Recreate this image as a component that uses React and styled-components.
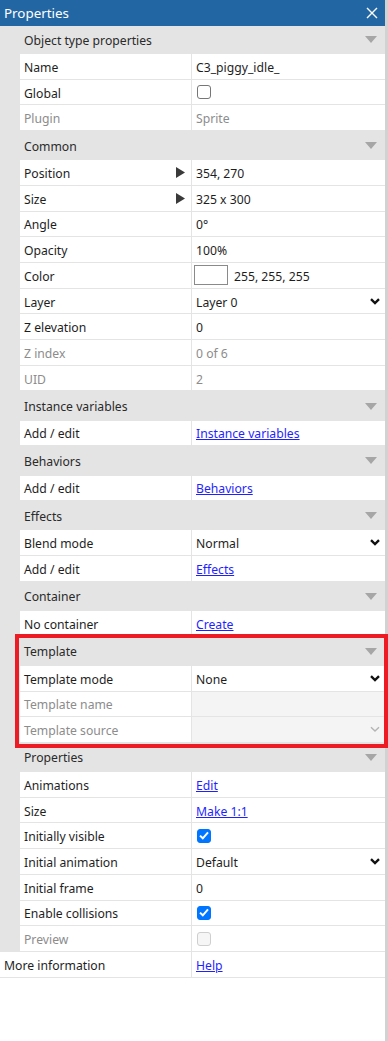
import React from 'react';
import styled, { createGlobalStyle } from 'styled-components';

const GlobalStyle = createGlobalStyle`
	body {
		margin: 0;
		background: #fff;
		font-family: "Noto Sans", "Open Sans", sans-serif;
		font-size: 12.2px;
		color: #1e1e1e;
	}
`;

const Panel = styled.div`
	position: relative;
	box-sizing: border-box;
	width: 388px;
	min-height: 1041px;
	border-right: 3px solid #d2d2d2;
	background: #fff;
`;

const TitleBar = styled.div`
	display: flex;
	align-items: center;
	justify-content: space-between;
	height: 26px;
	padding: 0 7px 0 4px;
	background: #2267a4;
	color: #fff;
	font-size: 13.4px;
`;

const Section = styled.div`
	background: #e4e4e4;
	padding-left: 20px;
`;

const Header = styled.div`
	display: flex;
	align-items: center;
	justify-content: space-between;
	box-sizing: border-box;
	height: ${p => (p.$first ? 28 : 29.2)}px;
	padding: ${p => (p.$first ? 0 : 1)}px 8px 0 4px;
	color: #2a2a2a;
`;

const Row = styled.div`
	display: grid;
	grid-template-columns: ${p => (p.$wide ? 192 : 172)}px 1fr;
	height: 25.7px;
	box-sizing: border-box;
	background: #fff;
	border-bottom: 1px solid #e4e4e4;
	color: ${p => (p.$disabled ? '#8c8c8c' : '#1e1e1e')};
`;

const Label = styled.div`
	display: flex;
	align-items: center;
	justify-content: space-between;
	padding: 2px 6px 0 4px;
	border-right: 1px solid #e4e4e4;
	white-space: nowrap;
`;

const Value = styled.div`
	display: flex;
	align-items: center;
	justify-content: space-between;
	padding: 2px 5px 0 4px;
	background: ${p => (p.$disabled ? '#f4f4f4' : '#fff')};
	white-space: nowrap;
`;

const Link = styled.a`
	color: #1f1fff;
	text-decoration: underline;
	cursor: pointer;
`;

const Box = styled.span`
	display: inline-flex;
	align-items: center;
	justify-content: center;
	box-sizing: border-box;
	width: 14px;
	height: 14px;
	margin: -2px 0 0 1px;
	border-radius: 3px;
	border: 1px solid ${p => (p.$checked ? '#0075ff' : p.$disabled ? '#cfcfcf' : '#767676')};
	background: ${p => (p.$checked ? '#0075ff' : p.$disabled ? '#f6f6f6' : '#fff')};
`;

const Swatch = styled.span`
	display: inline-block;
	box-sizing: border-box;
	width: 34px;
	height: 20px;
	margin: -2px 6px 0 -2px;
	border: 1px solid #8a8a8a;
	background: #fff;
`;

const Highlight = styled.div`
	position: absolute;
	left: 15px;
	top: 634px;
	width: 373px;
	height: 114px;
	box-sizing: border-box;
	border: 4px solid #ed1c24;
	pointer-events: none;
`;

const Close = () => (
	<svg width="12" height="12" viewBox="0 0 12 12">
		<path d="M1 1L11 11M11 1L1 11" stroke="#fff" strokeWidth="1.4" />
	</svg>
);

const Collapse = () => (
	<svg width="12" height="8" viewBox="0 0 12 8">
		<path d="M0 0H12L6 7Z" fill="#a6a6a6" />
	</svg>
);

const Chevron = ({ faded }) => (
	<svg width="10" height="7" viewBox="0 0 10 7" style={{ marginTop: -2 }}>
		<path d="M1 1.2L5 5L9 1.2" fill="none" stroke={faded ? '#b4b4b4' : '#111'} strokeWidth={faded ? 1.4 : 2.4} />
	</svg>
);

const Expand = () => (
	<svg width="9" height="11" viewBox="0 0 9 11" style={{ marginTop: -2 }}>
		<path d="M0 0L9 5.5L0 11Z" fill="#3a3a3a" />
	</svg>
);

const Check = ({ checked, disabled }) => (
	<Box $checked={checked} $disabled={disabled}>
		{checked && (
			<svg width="10" height="9" viewBox="0 0 10 9">
				<path d="M1 4.6L3.8 7.3L9 1.4" fill="none" stroke="#fff" strokeWidth="2" />
			</svg>
		)}
	</Box>
);

const Prop = ({ label, children, disabled, expand, select, faded }) => (
	<Row $disabled={disabled}>
		<Label>
			<span>{label}</span>
			{expand && <Expand />}
		</Label>
		<Value $disabled={faded}>
			<span style={{ display: 'flex', alignItems: 'center' }}>{children}</span>
			{select && <Chevron faded={faded} />}
		</Value>
	</Row>
);

const Group = ({ title, first, children }) => (
	<Section>
		<Header $first={first}>
			<span>{title}</span>
			<Collapse />
		</Header>
		{children}
	</Section>
);

export default function App() {
	return (
		<>
			<GlobalStyle />
			<Panel>
				<TitleBar>
					<span>Properties</span>
					<Close />
				</TitleBar>

				<Group title="Object type properties" first>
					<Prop label="Name">C3_piggy_idle_</Prop>
					<Prop label="Global"><Check /></Prop>
					<Prop label="Plugin" disabled>Sprite</Prop>
				</Group>

				<Group title="Common">
					<Prop label="Position" expand>354, 270</Prop>
					<Prop label="Size" expand>325 x 300</Prop>
					<Prop label="Angle">0°</Prop>
					<Prop label="Opacity">100%</Prop>
					<Prop label="Color"><Swatch />255, 255, 255</Prop>
					<Prop label="Layer" select>Layer 0</Prop>
					<Prop label="Z elevation">0</Prop>
					<Prop label="Z index" disabled>0 of 6</Prop>
					<Prop label="UID" disabled>2</Prop>
				</Group>

				<Group title="Instance variables">
					<Prop label="Add / edit"><Link>Instance variables</Link></Prop>
				</Group>

				<Group title="Behaviors">
					<Prop label="Add / edit"><Link>Behaviors</Link></Prop>
				</Group>

				<Group title="Effects">
					<Prop label="Blend mode" select>Normal</Prop>
					<Prop label="Add / edit"><Link>Effects</Link></Prop>
				</Group>

				<Group title="Container">
					<Prop label="No container"><Link>Create</Link></Prop>
				</Group>

				<Group title="Template">
					<Prop label="Template mode" select>None</Prop>
					<Prop label="Template name" disabled faded />
					<Prop label="Template source" disabled faded select />
				</Group>

				<Group title="Properties">
					<Prop label="Animations"><Link>Edit</Link></Prop>
					<Prop label="Size"><Link>Make 1:1</Link></Prop>
					<Prop label="Initially visible"><Check checked /></Prop>
					<Prop label="Initial animation" select>Default</Prop>
					<Prop label="Initial frame">0</Prop>
					<Prop label="Enable collisions"><Check checked /></Prop>
					<Prop label="Preview" disabled><Check disabled /></Prop>
				</Group>

				<Row $wide>
					<Label>More information</Label>
					<Value><Link>Help</Link></Value>
				</Row>

				<Highlight />
			</Panel>
		</>
	);
}
